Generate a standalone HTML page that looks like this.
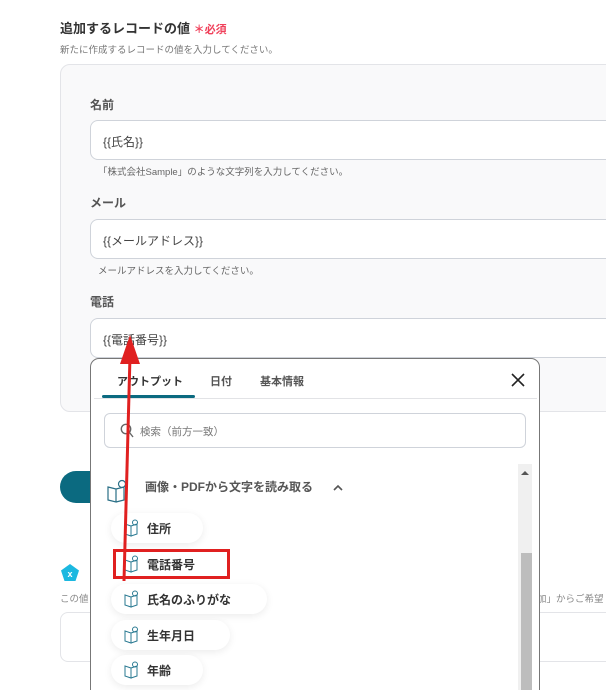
<!DOCTYPE html>
<html style="width:606px;height:690px;overflow:hidden"><head><meta charset="utf-8"><style>
*{box-sizing:border-box;margin:0;padding:0}
body{width:606px;height:690px;overflow:hidden;background:#fff;font-family:"Liberation Sans","Noto Sans CJK JP",sans-serif;position:relative;color:#333}
.a{position:absolute;white-space:nowrap}
.lbl{font-size:12px;font-weight:bold;color:#555}
.inp{position:absolute;left:90px;width:530px;height:40px;background:#fff;border:1px solid #cfd3da;border-radius:8px;font-size:12px;color:#444;padding:12px 0 0 12px}
.hint{font-size:9.5px;color:#666}
.pill{position:absolute;left:111px;height:30px;background:#fff;border-radius:15px;box-shadow:0 2px 8px rgba(0,0,0,.08);font-size:12px;font-weight:bold;color:#333;padding:7px 0 0 36px}
.pill svg{position:absolute;left:13px;top:6px}
</style></head><body>
<div class="a" style="left:60px;top:18px;font-size:13px;font-weight:bold;color:#333">追加するレコードの値 <span style="color:#f0405a;font-size:11px">＊必須</span></div>
<div class="a" style="left:60px;top:42px;font-size:9.5px;color:#777">新たに作成するレコードの値を入力してください。</div>
<div class="a" style="left:60px;top:64px;width:560px;height:348px;background:#f9f9fa;border:1px solid #e3e4e8;border-radius:10px"></div>
<div class="a lbl" style="left:90px;top:96px">名前</div>
<div class="inp" style="top:120px">{{氏名}}</div>
<div class="a hint" style="left:98px;top:164px">「株式会社Sample」のような文字列を入力してください。</div>
<div class="a lbl" style="left:90px;top:194px">メール</div>
<div class="inp" style="top:219px">{{メールアドレス}}</div>
<div class="a hint" style="left:98px;top:263px">メールアドレスを入力してください。</div>
<div class="a lbl" style="left:90px;top:293px">電話</div>
<div class="inp" style="top:318px">{{電話番号}}</div>
<div class="a" style="left:60px;top:471px;width:60px;height:32px;background:#0b6a80;border-radius:16px"></div>
<svg class="a" style="left:61px;top:564px" width="18" height="17" viewBox="0 0 18 17"><polygon points="9,0 18,6.5 14.5,17 3.5,17 0,6.5" fill="#1cb8e0"/><text x="9" y="13" font-size="9" fill="#fff" text-anchor="middle" font-weight="bold" font-family="Liberation Sans">x</text></svg>
<div class="a hint" style="left:60px;top:591px;color:#888">この値</div>
<div class="a hint" style="left:537px;top:591px;color:#888">加」からご希望</div>
<div class="a" style="left:60px;top:612px;width:560px;height:50px;border:1px solid #e3e4e8;border-radius:8px"></div>
<div class="a" style="left:90px;top:358px;width:450px;height:340px;background:#fff;border:1px solid #777;border-radius:9px 9px 0 0;overflow:hidden">
 <div class="a" style="left:26px;top:14px;font-size:11px;font-weight:bold;color:#333">アウトプット</div>
 <div class="a" style="left:119px;top:14px;font-size:11px;color:#555;font-weight:bold">日付</div>
 <div class="a" style="left:169px;top:14px;font-size:11px;color:#555;font-weight:bold">基本情報</div>
 <div class="a" style="left:11px;top:36px;width:93px;height:3px;background:#0b6a80;border-radius:2px"></div>
 <div class="a" style="left:3px;top:39px;width:443px;height:1px;background:#e2e3e6"></div>
 <svg class="a" style="left:420px;top:14px" width="14" height="14" viewBox="0 0 14 14"><path d="M1 1L13 13M13 1L1 13" stroke="#222" stroke-width="1.6"/></svg>
 <div class="a" style="left:13px;top:54px;width:422px;height:35px;border:1px solid #cfd3da;border-radius:6px"></div>
 <svg class="a" style="left:29px;top:64px" width="14" height="15" viewBox="0 0 14 15"><circle cx="6" cy="6" r="4.7" fill="none" stroke="#666" stroke-width="1.4"/><path d="M9.5 9.5L13 14" stroke="#666" stroke-width="1.4"/></svg>
 <div class="a" style="left:49px;top:65px;font-size:10.5px;color:#777">検索（前方一致）</div>
 <div class="a" style="left:427px;top:105px;width:14px;height:240px;background:#f0f0f0"></div>
 <div class="a" style="left:430px;top:194px;width:11px;height:150px;background:#bdbdbd"></div>
 <div class="a" style="left:430px;top:112px;width:0;height:0;border-left:4px solid transparent;border-right:4px solid transparent;border-bottom:4px solid #555"></div>
 <svg class="a" style="left:16px;top:120px" width="22" height="24" viewBox="0 0 22 24"><path d="M1 8L9 10V23L1 21Z M9 10L17 8V21L9 23" fill="none" stroke="#2a6f86" stroke-width="1.2"/><circle cx="15" cy="5" r="3.5" fill="none" stroke="#2a6f86" stroke-width="1.2"/></svg>
 <div class="a" style="left:54px;top:119px;font-size:12px;font-weight:bold;color:#555">画像・PDFから文字を読み取る</div>
 <svg class="a" style="left:242px;top:125px" width="10" height="7" viewBox="0 0 10 7"><path d="M1 6L5 2L9 6" fill="none" stroke="#555" stroke-width="1.6"/></svg>
</div>
<div class="pill" style="top:513px;width:92px">住所<svg width="16" height="18" viewBox="0 0 16 18"><path d="M1 5L7 7V17L1 15Z M7 7L13 5V15L7 17" fill="none" stroke="#2a7a92" stroke-width="1"/><circle cx="11" cy="3.5" r="2.5" fill="none" stroke="#2a7a92"/></svg></div>
<div class="pill" style="top:549px;width:118px;box-shadow:none">電話番号<svg width="16" height="18" viewBox="0 0 16 18"><path d="M1 5L7 7V17L1 15Z M7 7L13 5V15L7 17" fill="none" stroke="#2a7a92" stroke-width="1"/><circle cx="11" cy="3.5" r="2.5" fill="none" stroke="#2a7a92"/></svg></div>
<div class="a" style="left:113px;top:549px;width:117px;height:30px;border:3px solid #e02020"></div>
<div class="pill" style="top:584px;width:156px">氏名のふりがな<svg width="16" height="18" viewBox="0 0 16 18"><path d="M1 5L7 7V17L1 15Z M7 7L13 5V15L7 17" fill="none" stroke="#2a7a92" stroke-width="1"/><circle cx="11" cy="3.5" r="2.5" fill="none" stroke="#2a7a92"/></svg></div>
<div class="pill" style="top:620px;width:119px">生年月日<svg width="16" height="18" viewBox="0 0 16 18"><path d="M1 5L7 7V17L1 15Z M7 7L13 5V15L7 17" fill="none" stroke="#2a7a92" stroke-width="1"/><circle cx="11" cy="3.5" r="2.5" fill="none" stroke="#2a7a92"/></svg></div>
<div class="pill" style="top:655px;width:92px">年齢<svg width="16" height="18" viewBox="0 0 16 18"><path d="M1 5L7 7V17L1 15Z M7 7L13 5V15L7 17" fill="none" stroke="#2a7a92" stroke-width="1"/><circle cx="11" cy="3.5" r="2.5" fill="none" stroke="#2a7a92"/></svg></div>
<svg class="a" style="left:0;top:0" width="606" height="690"><line x1="124" y1="581" x2="130" y2="356" stroke="#e02020" stroke-width="3"/><polygon points="130,335 120,364 140,364" fill="#e02020"/></svg>
</body></html>
